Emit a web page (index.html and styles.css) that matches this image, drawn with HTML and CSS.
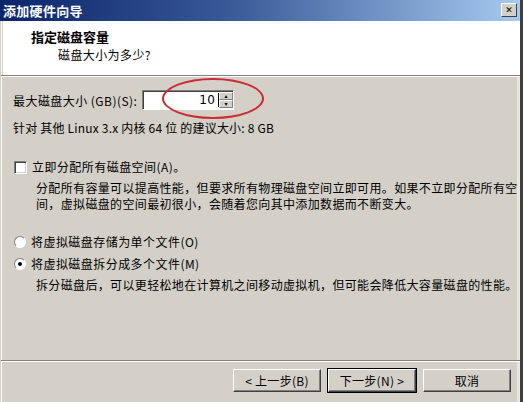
FILE: index.html
```html
<!DOCTYPE html>
<html lang="zh-CN">

<head>
  <meta charset="UTF-8">
  <title>添加硬件向导</title>
  <link rel="stylesheet" href="styles.css">
</head>

<body>
  <div class="window">
    <div class="titlebar">
      <span class="title">添加硬件向导</span>
      <span class="close">✕</span>
    </div>

    <div class="header">
      <div class="header-title">指定磁盘容量</div>
      <div class="header-sub">磁盘大小为多少?</div>
    </div>
    <div class="rule"></div>

    <div class="content">
      <div class="size-row">
        <span class="label">最大磁盘大小 (GB)(S):</span>
        <div class="spin">
          <span class="spin-value">10</span>
          <div class="spin-btns">
            <span class="spin-btn">▴</span>
            <span class="spin-btn">▾</span>
          </div>
          <span class="mark"></span>
        </div>
      </div>
      <div class="hint">针对 其他 Linux 3.x 内核 64 位 的建议大小: 8 GB</div>

      <div class="option check-row">
        <span class="checkbox"></span>
        <span>立即分配所有磁盘空间(A)。</span>
      </div>
      <div class="desc">分配所有容量可以提高性能，但要求所有物理磁盘空间立即可用。如果不立即分配所有空间，虚拟磁盘的空间最初很小，会随着您向其中添加数据而不断变大。</div>

      <div class="option radio-row first-radio">
        <span class="radio"></span>
        <span>将虚拟磁盘存储为单个文件(O)</span>
      </div>
      <div class="option radio-row">
        <span class="radio checked"></span>
        <span>将虚拟磁盘拆分成多个文件(M)</span>
      </div>
      <div class="desc">拆分磁盘后，可以更轻松地在计算机之间移动虚拟机，但可能会降低大容量磁盘的性能。</div>
    </div>

    <div class="footer">
      <div class="rule"></div>
      <div class="buttons">
        <span class="btn">&lt; 上一步(B)</span>
        <span class="btn default">下一步(N) &gt;</span>
        <span class="btn">取消</span>
      </div>
    </div>
  </div>
</body>

</html>
```

FILE: styles.css
```css
body {
  margin: 0;
  width: 523px;
  height: 402px;
  overflow: hidden;
  font-family: "Noto Sans CJK SC", "DejaVu Sans", sans-serif;
  font-size: 12px;
  color: #000;
}

.window {
  height: 402px;
  display: flex;
  flex-direction: column;
  background: #d4d0c8;
  border-left: 1px solid #d4d0c8;
  border-right: 3px solid #404040;
  box-shadow: inset 1px 0 0 #ffffff, inset 2px 0 0 #d4d0c8, inset -3px 0 0 #e8e4de;
  box-sizing: border-box;
}

.titlebar {
  height: 21px;
  margin-left: -1px;
  display: flex;
  align-items: center;
  justify-content: space-between;
  padding: 0 3px 0 3px;
  background: linear-gradient(to right, #0a246a 0%, #3a5a98 45%, #a6caf0 100%);
}

.title {
  color: #fff;
  font-weight: bold;
  font-size: 13px;
  letter-spacing: 0.3px;
}

.close {
  width: 16px;
  height: 14px;
  box-sizing: border-box;
  background: #d4d0c8;
  border: 1px solid;
  border-color: #fff #404040 #404040 #fff;
  font-size: 9px;
  font-weight: bold;
  line-height: 12px;
  text-align: center;
  margin-top: -1px;
}

.header {
  height: 54px;
  background: #fff;
  margin-left: 2px;
  padding: 7px 0 0 28px;
  box-sizing: border-box;
}

.header-title {
  font-weight: bold;
  font-size: 13px;
  line-height: 18px;
}

.header-sub {
  padding-left: 27px;
  line-height: 18px;
  letter-spacing: 0.4px;
}

.rule {
  height: 1px;
  border-top: 1px solid #808080;
  background: #fff;
}

.content {
  flex: 1;
  padding: 13px 0 0 12px;
  letter-spacing: 0.45px;
}

.size-row {
  display: flex;
  align-items: center;
  gap: 5px;
  height: 20px;
}

.spin {
  position: relative;
  width: 92px;
  height: 20px;
  box-sizing: border-box;
  display: flex;
  background: #fff;
  border: 1px solid;
  border-color: #808080 #fff #fff #808080;
  box-shadow: inset 1px 1px 0 #404040;
}

.spin-value {
  flex: 1;
  text-align: right;
  padding-right: 3px;
  font-family: "DejaVu Sans", sans-serif;
  font-size: 12px;
  border-right: 1px solid #000;
  margin: 2px 0;
  line-height: 14px;
}

.spin-btns {
  width: 14px;
  display: flex;
  flex-direction: column;
  padding: 1px 0;
}

.spin-btn {
  flex: 1;
  background: #d4d0c8;
  border: 1px solid;
  border-color: #fff #808080 #808080 #fff;
  font-size: 6px;
  line-height: 6px;
  text-align: center;
  color: #000;
}

.mark {
  position: absolute;
  left: 19px;
  top: -13px;
  width: 102px;
  height: 41px;
  box-sizing: border-box;
  border: 2px solid #cc2b36;
  border-radius: 50%;
}

.hint {
  margin-top: 10px;
  line-height: 16px;
  letter-spacing: 0.2px;
}

.option {
  display: flex;
  align-items: center;
  gap: 5px;
  line-height: 16px;
}

.check-row {
  margin-top: 23px;
  padding-left: 1px;
}

.checkbox {
  width: 13px;
  height: 13px;
  box-sizing: border-box;
  background: #fff;
  border: 1px solid;
  border-color: #808080 #fff #fff #808080;
  box-shadow: inset 1px 1px 0 #404040, inset -1px -1px 0 #d4d0c8;
}

.desc {
  padding: 5px 0 0 23px;
  line-height: 16px;
  letter-spacing: 0.35px;
}

.radio-row {
  padding-left: 1px;
  gap: 5px;
}

.first-radio {
  margin-top: 22px;
}

.radio-row + .radio-row {
  margin-top: 6px;
}

.radio {
  width: 12px;
  height: 12px;
  box-sizing: border-box;
  border-radius: 50%;
  background: #fff;
  border: 1px solid;
  border-color: #808080 #fff #fff #808080;
  display: flex;
  align-items: center;
  justify-content: center;
}

.radio.checked::after {
  content: "";
  width: 4px;
  height: 4px;
  border-radius: 50%;
  background: #000;
}

.footer {
  padding-bottom: 10px;
}

.buttons {
  display: flex;
  justify-content: flex-end;
  gap: 7px;
  padding: 7px 9px 0 0;
}

.btn {
  width: 88px;
  height: 23px;
  box-sizing: border-box;
  display: flex;
  align-items: center;
  justify-content: center;
  background: #d4d0c8;
  border: 1px solid;
  border-color: #fff #404040 #404040 #fff;
  box-shadow: inset -1px -1px 0 #808080;
  letter-spacing: 0.3px;
}

.btn.default {
  border-color: #fff #404040 #404040 #fff;
  box-shadow: inset -1px -1px 0 #808080, 0 0 0 1px #000;
}
```
